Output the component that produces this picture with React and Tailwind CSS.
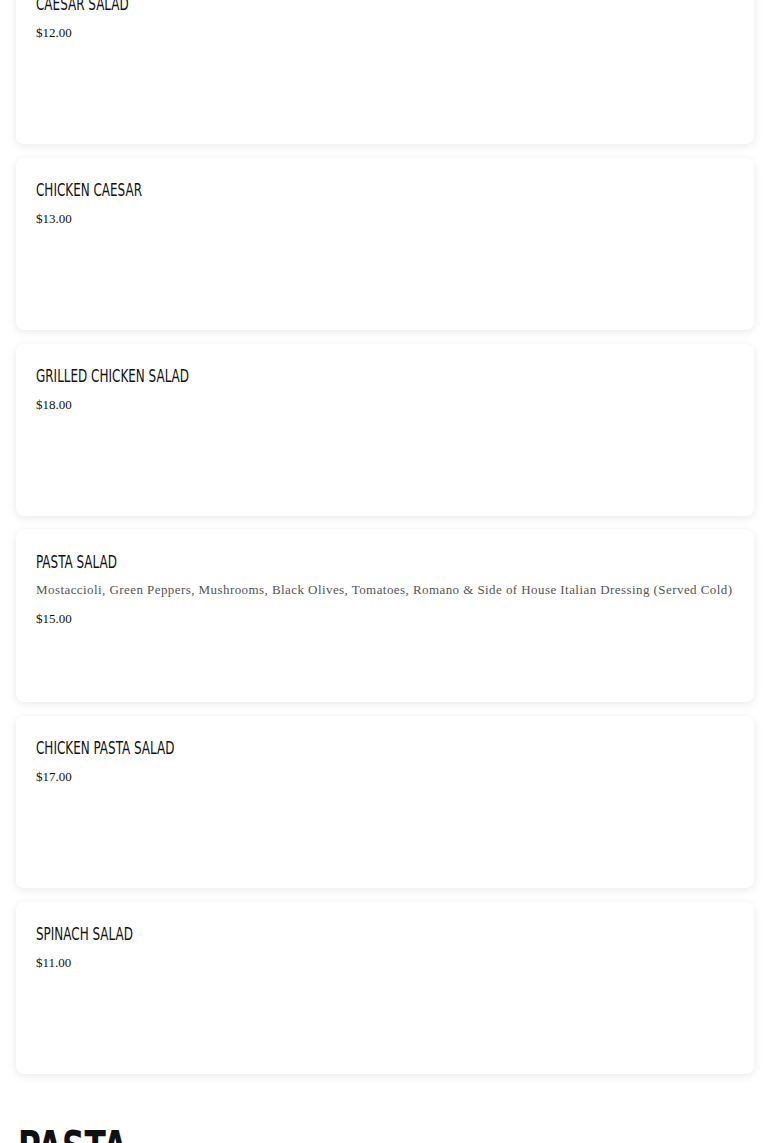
const salads = [
  { name: "Caesar Salad", price: "$12.00" },
  { name: "Chicken Caesar", price: "$13.00" },
  { name: "Grilled Chicken Salad", price: "$18.00" },
  {
    name: "Pasta Salad",
    desc: "Mostaccioli, Green Peppers, Mushrooms, Black Olives, Tomatoes, Romano & Side of House Italian Dressing (Served Cold)",
    price: "$15.00",
  },
  { name: "Chicken Pasta Salad", price: "$17.00" },
  { name: "Spinach Salad", price: "$11.00" },
];

function MenuCard({ item }) {
  return (
    <div className="h-[172px] bg-white rounded-lg shadow-[0_2px_10px_rgba(0,0,0,0.09)] px-5 pt-[20px]">
      <h3 className="uppercase text-[18px] leading-[24px] text-[#111] font-['Liberation_Sans_Narrow','DejaVu_Sans_Condensed',sans-serif] origin-left scale-x-[0.74] whitespace-nowrap">
        {item.name}
      </h3>
      {item.desc && (
        <p className="mt-[4px] text-[13px] leading-[24px] text-[#555] tracking-[0.43px] font-['Liberation_Serif',serif] whitespace-nowrap">
          {item.desc}
        </p>
      )}
      <p className="mt-[5px] text-[13px] leading-[24px] text-[#111] font-['Liberation_Serif',serif]">
        {item.price}
      </p>
    </div>
  );
}

export default function App() {
  return (
    <div className="bg-white min-h-[1143px] overflow-hidden">
      <div className="-mt-[28px] px-4 flex flex-col gap-[14px]">
        {salads.map((s) => (
          <MenuCard key={s.name} item={s} />
        ))}
      </div>
      <div className="mt-[50px] pl-[18px]">
        <h2 className="uppercase text-[44px] leading-[48px] font-bold text-[#111] font-['Liberation_Sans_Narrow','DejaVu_Sans_Condensed',sans-serif] origin-left scale-x-[0.79]">
          Pasta
        </h2>
      </div>
    </div>
  );
}
